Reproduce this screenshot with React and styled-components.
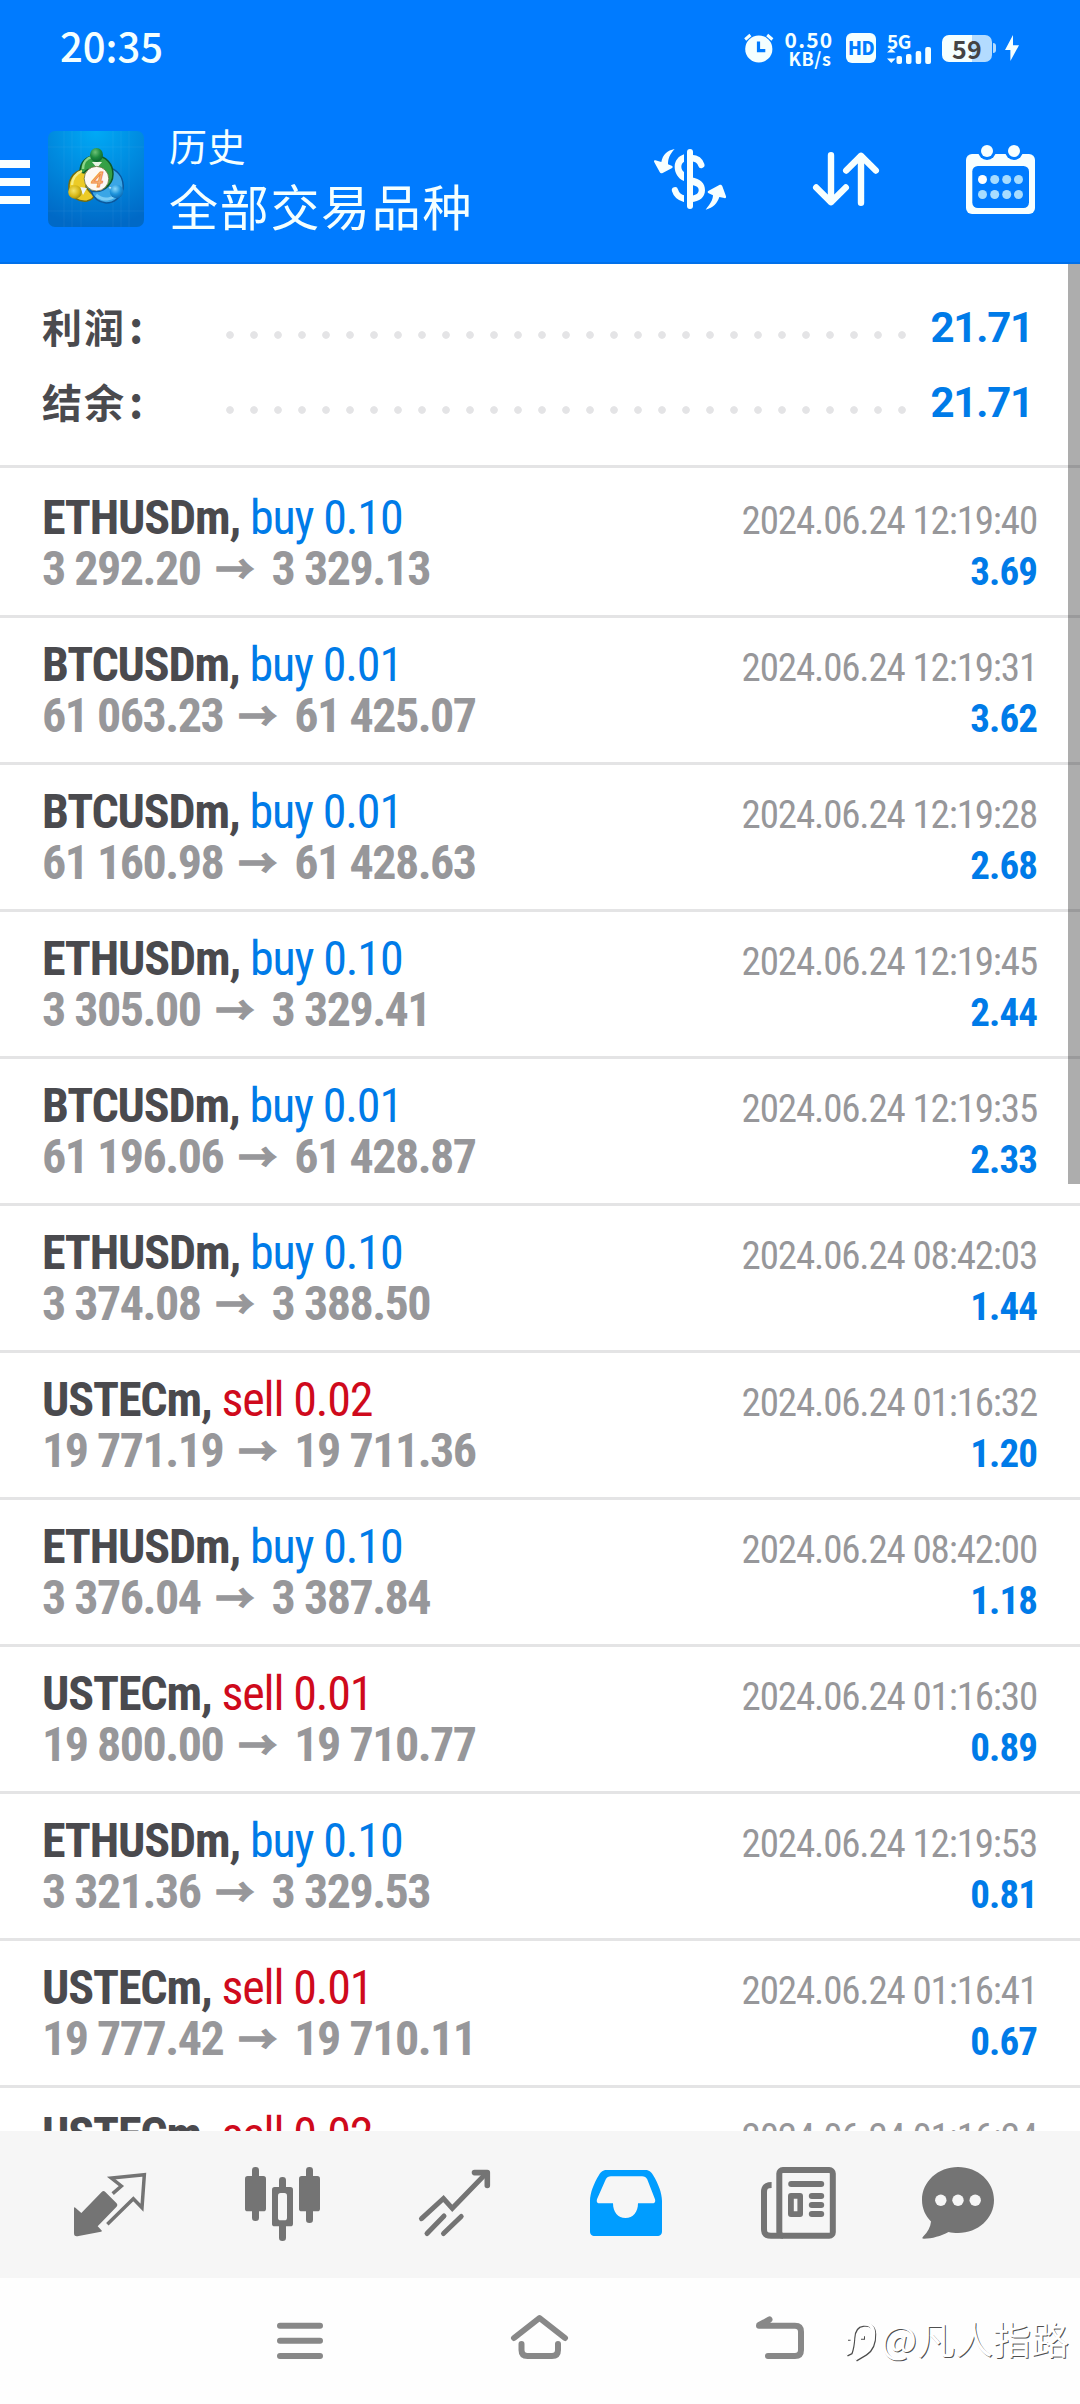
import React from "react";
import styled, { createGlobalStyle } from "styled-components";

const cjk = `"Noto Sans CJK SC", sans-serif`;
const condensed = `"Roboto Condensed", Roboto, ${cjk}`;
const BLUE = "#007bff";
const VALUE_BLUE = "#007be8";

const Global = createGlobalStyle`
  * { box-sizing: border-box; }
  body { margin: 0; background: #fff; }
  svg { display: block; flex: none; overflow: visible; }
`;

const Screen = styled.div`
  width: 1080px;
  height: 2404px;
  display: flex;
  flex-direction: column;
  overflow: hidden;
  background: #fff;
  font-family: ${condensed};
`;

/* ---------- status bar ---------- */
const StatusBar = styled.div`
  height: 96px;
  flex: none;
  display: flex;
  align-items: center;
  padding: 0 61px 0 60px;
  background: ${BLUE};
  color: #f4ffff;
  font-family: ${cjk};
`;
const Clock = styled.div`
  font-size: 40px;
  font-weight: 500;
  line-height: 40px;
  margin-right: auto;
  padding-bottom: 6px;
`;
const StatusIcons = styled.div`
  display: flex;
  align-items: center;
`;
const Speed = styled.div`
  width: 50px;
  margin-left: 10px;
  display: flex;
  flex-direction: column;
  text-align: center;
  font-weight: 700;
  white-space: nowrap;
`;
const SpeedValue = styled.span`
  font-size: 21px;
  line-height: 19px;
  letter-spacing: 1.2px;
`;
const SpeedUnit = styled.span`
  font-size: 18px;
  line-height: 18px;
  letter-spacing: 0.6px;
  padding-left: 2px;
`;
const Badge = styled.div`
  width: 30px;
  height: 30px;
  margin-left: 12px;
  border-radius: 6px;
  background: #f4ffff;
  color: ${BLUE};
  font: 900 18px/29px ${cjk};
  letter-spacing: -0.6px;
  text-align: center;
`;
const Network = styled.div`
  width: 44px;
  height: 31px;
  margin-left: 11px;
  font: 700 19px/15px ${cjk};
  letter-spacing: -0.5px;
`;
const Battery = styled.div`
  width: 50px;
  height: 27px;
  margin-left: 11px;
  border-radius: 7px;
  background: linear-gradient(90deg, #f4ffff 60%, #b3dbff 60%);
  color: #444;
  font: 700 25px/26px ${cjk};
  letter-spacing: 0.3px;
  text-align: center;
`;
const BatteryNub = styled.div`
  width: 3px;
  height: 10px;
  margin: 0 9px 0 1px;
  border-radius: 0 3px 3px 0;
  background: #b3dbff;
`;

/* ---------- app bar ---------- */
const AppBar = styled.header`
  height: 168px;
  flex: none;
  display: flex;
  align-items: center;
  padding: 0 45px 0 0;
  background: ${BLUE};
  border-bottom: 2px solid #0070ea;
`;
const MenuButton = styled.div`
  width: 48px;
  display: flex;
  flex-direction: column;
  gap: 10px;
  padding-top: 5px;
`;
const MenuLine = styled.span`
  width: 30px;
  height: 8px;
  background: #f9ffff;
`;
const Titles = styled.div`
  margin: 0 auto 0 25px;
  color: #f4ffff;
  font-family: ${cjk};
  white-space: nowrap;
`;
const Caption = styled.div`
  font-size: 38px;
  line-height: 48px;
  letter-spacing: 0.5px;
  padding-top: 3px;
`;
const Title = styled.h1`
  margin: 0;
  font-size: 49px;
  font-weight: 400;
  line-height: 71px;
  letter-spacing: 1.7px;
`;
const Actions = styled.div`
  display: flex;
  align-items: center;
  gap: 87px;
`;

/* ---------- history ---------- */
const History = styled.main`
  position: relative;
  height: 1867px;
  flex: none;
  overflow: hidden;
`;
const Scrollbar = styled.div`
  position: absolute;
  top: 0;
  right: 0;
  width: 12px;
  height: 920px;
  background: rgba(0, 0, 0, 0.32);
`;
const Summary = styled.section`
  height: 204px;
  padding: 26px 46px 0 42px;
  border-bottom: 3px solid #e4e4e5;
`;
const SummaryRow = styled.div`
  height: 75px;
  display: flex;
  align-items: center;
`;
const SummaryLabel = styled.div`
  width: 184px;
  color: #4a4a4e;
  font: 700 40px/75px ${cjk};
  letter-spacing: 2px;
  padding-bottom: 3px;
`;
const Colon = styled.span`
  margin-left: 3px;
  font-size: 44px;
  line-height: 40px;
`;
const Dots = styled.div`
  width: 696px;
  height: 8px;
  margin-top: 15px;
  background: radial-gradient(circle 4px at 4px 4px, #e4e4e6 3.4px, transparent 4.2px) 0 0 / 24px 8px;
`;
const SummaryValue = styled.div`
  margin-left: auto;
  color: ${VALUE_BLUE};
  font: 700 42px/75px Roboto, sans-serif;
  letter-spacing: -1.2px;
  margin-right: 1px;
`;
const Deal = styled.article`
  height: 147px;
  padding: 21px 42px 0 42px;
  border-bottom: 3px solid #e4e4e5;
  &:first-of-type { height: 150px; padding-top: 24px; }
`;
const Line = styled.div`
  height: 51px;
  display: flex;
  justify-content: space-between;
  align-items: baseline;
  line-height: 51px;
  white-space: pre;
`;
const Order = styled.div`
  font-size: 48px;
  letter-spacing: -1.15px;
`;
const Symbol = styled.span`
  color: #4a4a4e;
  font-weight: 700;
`;
const Side = styled.span`
  color: ${(p) => (p.$sell ? "#cf0a1c" : VALUE_BLUE)};
`;
const Prices = styled.div`
  color: #97979a;
  font-size: 48px;
  font-weight: 700;
  letter-spacing: -1.5px;
`;
const Arrow = styled.span`
  display: inline-block;
  width: 36px;
  margin: 0 17px 0 18px;
  font: 700 39px/40px ${cjk};
  letter-spacing: 0;
  text-indent: -3px;
  vertical-align: 2px;
  -webkit-text-stroke: 1.4px currentColor;
`;
const Time = styled.time`
  color: #97979a;
  font-size: 39px;
  letter-spacing: -1.15px;
  margin-right: 1px;
`;
const Profit = styled.div`
  color: ${VALUE_BLUE};
  font-size: 39px;
  font-weight: 700;
  letter-spacing: -0.9px;
  margin-right: 1px;
`;

/* ---------- bottom ---------- */
const TabBar = styled.nav`
  height: 147px;
  flex: none;
  display: flex;
  padding: 36px 48px 0 24px;
  background: #f6f6f6;
`;
const Tab = styled.div`
  width: ${(p) => p.$w || 172}px;
  flex: none;
  display: flex;
  justify-content: center;
  color: ${(p) => (p.$active ? "#009dff" : "#747474")};
`;
const SystemNav = styled.div`
  position: relative;
  flex: 1;
  display: flex;
  align-items: flex-start;
  padding: 36px 0 0 277px;
  gap: 188px;
  background: #fefefe;
  color: #888;
`;
const Watermark = styled.div`
  position: absolute;
  left: 845px;
  top: 35px;
  display: flex;
  align-items: center;
  color: #fff;
  font: 400 38px/50px ${cjk};
  text-shadow: 1px 1px 0.5px rgba(0, 0, 0, 0.7);
  white-space: nowrap;
`;
const WatermarkMark = styled.svg`
  filter: drop-shadow(1px 1px 0.3px rgba(0, 0, 0, 0.7));
  margin-right: 5px;
`;

const deals = [
  ["ETHUSDm", "buy 0.10", "2024.06.24 12:19:40", "3 292.20", "3 329.13", "3.69"],
  ["BTCUSDm", "buy 0.01", "2024.06.24 12:19:31", "61 063.23", "61 425.07", "3.62"],
  ["BTCUSDm", "buy 0.01", "2024.06.24 12:19:28", "61 160.98", "61 428.63", "2.68"],
  ["ETHUSDm", "buy 0.10", "2024.06.24 12:19:45", "3 305.00", "3 329.41", "2.44"],
  ["BTCUSDm", "buy 0.01", "2024.06.24 12:19:35", "61 196.06", "61 428.87", "2.33"],
  ["ETHUSDm", "buy 0.10", "2024.06.24 08:42:03", "3 374.08", "3 388.50", "1.44"],
  ["USTECm", "sell 0.02", "2024.06.24 01:16:32", "19 771.19", "19 711.36", "1.20"],
  ["ETHUSDm", "buy 0.10", "2024.06.24 08:42:00", "3 376.04", "3 387.84", "1.18"],
  ["USTECm", "sell 0.01", "2024.06.24 01:16:30", "19 800.00", "19 710.77", "0.89"],
  ["ETHUSDm", "buy 0.10", "2024.06.24 12:19:53", "3 321.36", "3 329.53", "0.81"],
  ["USTECm", "sell 0.01", "2024.06.24 01:16:41", "19 777.42", "19 710.11", "0.67"],
  ["USTECm", "sell 0.02", "2024.06.24 01:16:24"],
];

const AlarmIcon = () => (
  <svg width="30" height="30" viewBox="0 0 30 30">
    <circle cx="14.8" cy="16" r="13.6" fill="#f4ffff" />
    <path d="M1.2 6.5 6.4 2M28.4 6.5 23.2 2" stroke="#f4ffff" strokeWidth="3" />
    <path d="M14.5 8.5v9.2h6.8" fill="none" stroke={BLUE} strokeWidth="3.2" />
  </svg>
);
const SignalIcon = () => (
  <svg width="44" height="16" viewBox="0 0 44 16">
    <g fill="#f4ffff">
      <path d="M0 4.5 4.3.5l4.3 4zM0 10.5l4.3 4.5 4.3-4.5z" />
      <rect x="9.5" y="8" width="5.5" height="8" rx="2" />
      <rect x="19" y="6" width="5.5" height="10" rx="2" />
      <rect x="28.7" y="3" width="5.5" height="13" rx="2" />
      <rect x="38.2" y="-1" width="5.8" height="17" rx="2" />
    </g>
  </svg>
);
const BoltIcon = () => (
  <svg width="14" height="26" viewBox="0 0 14 26" fill="#f4ffff">
    <path d="M8 0 0 15h5.4v11L14 10.2H8z" />
  </svg>
);
const Logo = () => (
  <svg width="96" height="96" viewBox="0 0 96 96">
    <defs>
      <radialGradient id="bg" cx=".5" cy="0" r="1">
        <stop offset="0" stopColor="#00aaf6" />
        <stop offset=".55" stopColor="#0086dc" />
        <stop offset="1" stopColor="#0069c6" />
      </radialGradient>
      <radialGradient id="green" cx=".4" cy=".3" r=".8">
        <stop offset="0" stopColor="#6cc276" />
        <stop offset=".5" stopColor="#1c8a3e" />
        <stop offset="1" stopColor="#0a5a2a" />
      </radialGradient>
      <radialGradient id="yellow" cx=".4" cy=".4" r=".8">
        <stop offset="0" stopColor="#f4e468" />
        <stop offset=".5" stopColor="#d8b818" />
        <stop offset="1" stopColor="#7c7410" />
      </radialGradient>
      <radialGradient id="azure" cx=".4" cy=".3" r=".8">
        <stop offset="0" stopColor="#8ad8fa" />
        <stop offset=".5" stopColor="#1e94dc" />
        <stop offset="1" stopColor="#0a60a8" />
      </radialGradient>
    </defs>
    <rect width="96" height="96" rx="7" fill="url(#bg)" />
    <path d="M16 0v96M24 0v96M33 0v96M65 0v96M73 0v96M81 0v96M0 16h96M0 80h96" stroke="#fff" strokeOpacity=".05" />
    <path d="M40 38C27 38 20 47 21 58 23 66 30 71 39 70 43 69 46 67 46 64 42 62 40 59 38 56z" fill="#eccb26" stroke="#716b10" strokeWidth="1.5" />
    <path d="M63 37C72 41 76 49 75 58 72 67 66 72 58 72 50 71 45 66 43 60 52 62 60 58 63 50z" fill="#3aa6e6" stroke="#0b579c" strokeWidth="1.5" />
    <path d="M48 64C56 71 65 68 71 62" fill="none" stroke="#7accf5" strokeWidth="3" />
    <path d="M32 41C32 31 38 25 48 25S65 33 65 43C65 49 62 54 57 57L55 42C54 37 40 36 36 42z" fill="#35a045" stroke="#0d5a2a" strokeWidth="1.5" />
    <path d="M35 38c0-7 4-11 9-12" fill="none" stroke="#8bd68a" strokeWidth="2.4" />
    <path d="M24 54c0-6 4-12 10-14" fill="none" stroke="#f6ec80" strokeWidth="2.400" />
    <path d="M44 31h10l-5 6z" fill="#e9f5e4" />
    <path d="M32 56l7 1-4 7zM61 56l7 1-4 6z" fill="#eaf4fa" />
    <ellipse cx="48.500" cy="24" rx="6.500" ry="7" fill="url(#green)" />
    <circle cx="27" cy="61" r="6.800" fill="url(#yellow)" />
    <circle cx="68.500" cy="60.500" r="6.800" fill="url(#azure)" />
    <circle cx="48.500" cy="47.700" r="12.300" fill="#fdf8f4" stroke="#6a6f3a" strokeWidth=".8" />
    <text x="48" y="55.500" textAnchor="middle" fontFamily={cjk} fontSize="21" fontWeight="500" fontStyle="italic" fill="#f8b27a" stroke="#ee8636" strokeWidth=".8">4</text>
  </svg>
);
const MoneyIcon = () => (
  <svg width="72" height="62" viewBox="0 0 216 186">
    <g fill="#f7ffff">
      <path d="M90 19C72 25 62 40 62 56 62 74 72 92 90 99V72C85 68 82 62 82 56 82 49 85 44 90 41z" />
      <path fillRule="evenodd" d="M112 88C140 92 153 107 153 127 153 149 136 161 112 163zM112 111V143C126 142 134 136 134 127 134 118 128 113 112 111z" />
      <path d="M62 3C40 7 26 20 22 42L4 37C0 36-1 39 1 43L17 72C19 76 22 77 26 75L53 61C57 59 57 55 53 53L42 49C42 31 48 18 62 3z" />
      <path d="M155 185C168 168 176 158 177 142L164 136C160 134 160 130 164 128L196 111C200 109 204 111 205 115L216 145C217 150 214 152 211 150L196 147C190 166 178 179 155 185z" />
    </g>
    <g fill="none" stroke="#f7ffff" strokeWidth="19" strokeLinecap="round">
      <path d="M112 30C129 31 138 38 142 51" />
      <path d="M63 127C67 140 76 148 90 152" />
    </g>
    <path d="M94.500 14v154" stroke={BLUE} strokeWidth="9" />
    <path d="M108 12v162" stroke="#f7ffff" strokeWidth="18" strokeLinecap="round" />
  </svg>
);
const SortIcon = () => (
  <svg width="66" height="54" viewBox="0 0 66 54" fill="none" stroke="#f7ffff" strokeWidth="6.400" strokeLinecap="round" strokeLinejoin="round">
    <path d="M18 3.200V50M3.200 35.500 18 50.200l14.800-14.700M48 50.800V4M33.200 18.500 48 3.800l14.800 14.700" />
  </svg>
);
const CalendarIcon = () => (
  <svg width="69" height="69" viewBox="0 0 69 69">
    <rect y="9" width="69" height="60" rx="6" fill="#f7ffff" />
    <rect x="6.300" y="21" width="56.700" height="42" rx="5.500" fill={BLUE} />
    <circle cx="21" cy="6" r="9" fill={BLUE} />
    <circle cx="48" cy="6" r="9" fill={BLUE} />
    <circle cx="21" cy="6" r="6" fill="#f7ffff" />
    <circle cx="48" cy="6" r="6" fill="#f7ffff" />
    {[35, 50].map((y) => [16.5, 28.7, 40.700, 52.500].map((x) => (
      <circle key={x + "-" + y} cx={x} cy={y - 0.500} r="4.500" fill={x === 16.5 && y === 35 ? "#fff" : "#a6dcff"} />
    )))}
  </svg>
);

const QuotesIcon = () => (
  <svg width="72" height="74" viewBox="42 50 216 222">
    <path d="M42 174c0-4 2-4 5-1l17 15 61-63c4-4 7-4 11 0l33 33c4 4 4 8 0 12l-56 58 10 10c4 3 3 5 0 6l-67 13c-10 2-14 0-14-9z" fill="currentColor" />
    <path d="M158 130 184 107 154 83 253 73 246 172 220 145 142 222" fill="none" stroke="currentColor" strokeWidth="10.500" />
  </svg>
);
const ChartIcon = () => (
  <svg width="75" height="74" viewBox="552 50 225 222" fill="currentColor">
    <rect x="573" y="50" width="21" height="162" rx="10" />
    <rect x="552" y="77" width="63" height="106" rx="8" />
    <rect x="735" y="50" width="21" height="168" rx="10" />
    <rect x="714" y="77" width="63" height="106" rx="8" />
    <rect x="654" y="80" width="21" height="192" rx="10" />
    <rect x="633" y="110" width="63" height="118" rx="8" />
    <rect x="651" y="128" width="27" height="82" rx="8" fill="#f6f6f6" />
  </svg>
);
const TradeIcon = () => (
  <svg width="71" height="74" viewBox="0 0 71 74" fill="none" stroke="currentColor" strokeWidth="5" strokeLinecap="round">
    <path d="M2.500 51.700 24.500 31.500 33.300 41.300 67.500 6" strokeLinejoin="miter" />
    <path d="M55.500 5.600H68.300V18.500" strokeWidth="5.600" strokeLinejoin="round" />
    <path d="M8 66.500 25 49M24.500 66.500 42.200 49.500" />
  </svg>
);
const HistoryIcon = () => (
  <svg width="72" height="74" viewBox="0 0 72 74" fill="currentColor" fillRule="evenodd">
    <path d="M17 3H55c4 0 6 1.500 8 5 5 8 9 18 9 26V64c0 3.500-1.500 5-5 5H5c-3.500 0-5-1.500-5-5V34C0 26 4 16 9 8c2-3.500 4-5 8-5zM21 9.200c-2.500 0-4.200 1-5.200 3L7.300 31.500c-1.200 3-.3 4.800 2 4.800H23c0 9 5 14.700 12.500 14.700S48 45.300 48 36.300H62.700c2.300 0 3.200-1.800 2-4.800L57.200 12.200c-1-2-2.700-3-5.200-3z" />
  </svg>
);
const NewsIcon = () => (
  <svg width="75" height="74" viewBox="0 0 75 74">
    <path d="M10.600 18C5.500 18 3 20 3 25V62c0 5 2 6.700 7 6.700H22" fill="none" stroke="currentColor" strokeWidth="6" />
    <rect x="18.300" y="3" width="53.500" height="65.700" rx="3.500" fill="none" stroke="currentColor" strokeWidth="6" />
    <g fill="currentColor">
      <rect x="27.200" y="14" width="36" height="6" rx="3" />
      <path fillRule="evenodd" d="M30 26h9q3 0 3 3v18q0 3-3 3h-9q-3 0-3-3V29q0-3 3-3zM32.800 31.700v12.600h3.600V31.700z" />
      <rect x="47.800" y="26" width="15.400" height="6" rx="3" />
      <rect x="47.800" y="35" width="15.400" height="6" rx="3" />
      <rect x="47.800" y="44" width="15.400" height="6" rx="3" />
    </g>
  </svg>
);
const ChatIcon = () => (
  <svg width="72" height="74" viewBox="0 0 72 74">
    <path d="M36 0C56 0 72 14.500 72 33S56 66 36 66c-3.500 0-6.500-.3-9.500-1C19 69 10 71.700 2 71.700c-2 0-2.200-1-.8-2.300C6 65 8.500 60 9 54.500 3.500 49 0 41.500 0 33 0 14.500 16 0 36 0z" fill="currentColor" />
    <g fill="#f6f6f6">
      <circle cx="18.800" cy="33.300" r="5.700" />
      <circle cx="36" cy="33.300" r="5.700" />
      <circle cx="53.200" cy="33.300" r="5.700" />
    </g>
  </svg>
);

export default function App() {
  return (
    <Screen>
      <Global />
      <StatusBar>
        <Clock>20:35</Clock>
        <StatusIcons>
          <AlarmIcon />
          <Speed>
            <SpeedValue>0.50</SpeedValue>
            <SpeedUnit>KB/s</SpeedUnit>
          </Speed>
          <Badge>HD</Badge>
          <Network>
            5G
            <SignalIcon />
          </Network>
          <Battery>59</Battery>
          <BatteryNub />
          <BoltIcon />
        </StatusIcons>
      </StatusBar>
      <AppBar>
        <MenuButton>
          <MenuLine />
          <MenuLine />
          <MenuLine />
        </MenuButton>
        <Logo />
        <Titles>
          <Caption>历史</Caption>
          <Title>全部交易品种</Title>
        </Titles>
        <Actions>
          <MoneyIcon />
          <SortIcon />
          <CalendarIcon />
        </Actions>
      </AppBar>
      <History>
        <Summary>
          {["利润", "结余"].map((label) => (
            <SummaryRow key={label}>
              <SummaryLabel>
                {label}
                <Colon>:</Colon>
              </SummaryLabel>
              <Dots />
              <SummaryValue>21.71</SummaryValue>
            </SummaryRow>
          ))}
        </Summary>
        {deals.map(([symbol, side, time, open, close, profit]) => (
          <Deal key={time}>
            <Line>
              <Order>
                <Symbol>{symbol}, </Symbol>
                <Side $sell={side.startsWith("sell")}>{side}</Side>
              </Order>
              <Time>{time}</Time>
            </Line>
            {open && (
              <Line>
                <Prices>
                  {open}
                  <Arrow>→</Arrow>
                  {close}
                </Prices>
                <Profit>{profit}</Profit>
              </Line>
            )}
          </Deal>
        ))}
        <Scrollbar />
      </History>
      <TabBar>
        <Tab><QuotesIcon /></Tab>
        <Tab><ChartIcon /></Tab>
        <Tab><TradeIcon /></Tab>
        <Tab $active><HistoryIcon /></Tab>
        <Tab><NewsIcon /></Tab>
        <Tab $w={148}><ChatIcon /></Tab>
      </TabBar>
      <SystemNav>
        <svg width="46" height="46" viewBox="0 0 46 46" stroke="currentColor" strokeWidth="6" strokeLinecap="round">
          <path d="M3 11.700H43M3 26.700H43M3 42H43" />
        </svg>
        <svg width="57" height="46" viewBox="0 0 57 46" fill="none" stroke="currentColor" strokeWidth="6" strokeLinecap="round" strokeLinejoin="round">
          <path d="M3 24 28.500 4 54 24M10.500 30V36q0 6 6 6H41q6 0 6-6V30" />
        </svg>
        <svg width="48" height="46" viewBox="0 0 48 46" fill="none" stroke="currentColor" strokeWidth="6" strokeLinecap="round" strokeLinejoin="round">
          <path d="M3 11.700H39q6 0 6 6V36q0 6-6 6H12M3.300 11 13.500 5.500" />
        </svg>
        <Watermark>
          <WatermarkMark width="31" height="50" viewBox="0 0 31 50" fill="none" stroke="#fff" strokeWidth="3.500">
            <path d="M1 41 5 39Q7 34 7.500 25M2 25H7.500Q8 12 18 11 28 10 28.500 20 29 34 20 40L10 46M15 24H19" />
          </WatermarkMark>
          @凡人指路
        </Watermark>
      </SystemNav>
    </Screen>
  );
}
